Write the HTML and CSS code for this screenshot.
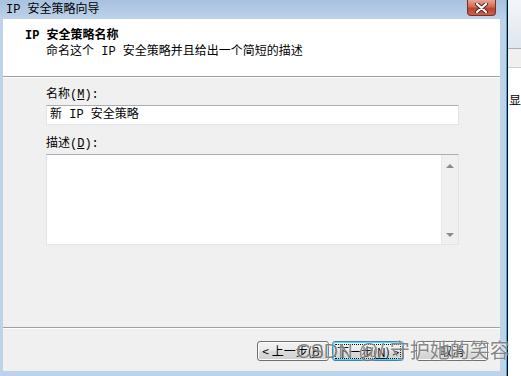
FILE: index.html
```html
<!DOCTYPE html>
<html lang="zh-CN">
<head>
    <meta charset="UTF-8">
    <meta name="viewport" content="width=device-width, initial-scale=1.0">
    <title>IP 安全策略向导</title>
    <link rel="stylesheet" href="styles.css">
</head>
<body>
    <div class="screen">
        <div class="wizard">
            <div class="titlebar">
                <span class="title">IP 安全策略向导</span>
                <div class="close">
                    <svg width="17" height="10" viewBox="0 0 17 10">
                        <path d="M4 1 L13 9 M13 1 L4 9" stroke="#4a2a26" stroke-width="4" stroke-linecap="round"/>
                        <path d="M4 1 L13 9 M13 1 L4 9" stroke="#ffffff" stroke-width="2.2" stroke-linecap="round"/>
                    </svg>
                </div>
            </div>
            <div class="frame">
                <div class="header">
                    <div class="header-title">IP 安全策略名称</div>
                    <div class="header-sub">命名这个 IP 安全策略并且给出一个简短的描述</div>
                </div>

                <div class="content">
                    <div class="label">名称(<u>M</u>):</div>
                    <div class="field">新 IP 安全策略</div>

                    <div class="label label-gap">描述(<u>D</u>):</div>
                    <div class="memo">
                        <div class="memo-text"></div>
                        <div class="scroll">
                            <span class="arrow-up"></span>
                            <span class="arrow-down"></span>
                        </div>
                    </div>
                </div>

                <div class="footer">
                    <div class="btn">&lt; 上一步(<u>B</u>)</div>
                    <div class="btn btn-default"><span class="focus">下一步(<u>N</u>) &gt;</span></div>
                    <div class="btn btn-cancel">取消</div>
                </div>
            </div>
            <div class="watermark">CSDN @/ 守护她的笑容</div>
        </div>
        <div class="edge"></div>
        <div class="behind">
            <div class="behind-top"></div>
            <div class="behind-bar"></div>
            <div class="behind-text">显示</div>
        </div>
    </div>
</body>
</html>
```

FILE: styles.css
```css
body {
    margin: 0;
    font-family: "Liberation Mono", "Noto Sans CJK SC", monospace;
    font-size: 12px;
    color: #000;
    background: #ffffff;
}
.screen {
    display: flex;
    width: 521px;
    height: 376px;
    overflow: hidden;
}
.wizard {
    position: relative;
    width: 506px;
    flex: none;
    display: flex;
    flex-direction: column;
    background: #bcd3ea;
}
.titlebar {
    height: 19px;
    display: flex;
    align-items: flex-start;
    justify-content: space-between;
    background: linear-gradient(#a8c1df, #bdd2ea);
}
.title {
    padding: 3px 0 0 6px;
    line-height: 14px;
}
.close {
    width: 27px;
    height: 15px;
    margin-right: 10px;
    border: 1px solid #7a2f24;
    border-top: none;
    border-radius: 0 0 4px 4px;
    background: linear-gradient(#e6a596, #d06a55 45%, #bf432b 55%, #c9624c);
    display: flex;
    align-items: center;
    justify-content: center;
}
.frame {
    margin: 0 6px 0 3px;
    height: 352px;
    display: flex;
    flex-direction: column;
    background: #f0f0f0;
}
.header {
    background: #ffffff;
    border-bottom: 1px solid #a0a0a0;
    box-shadow: 0 1px 0 #ffffff;
    padding: 10px 0 0 22px;
    height: 47px;
    line-height: 14px;
}
.header-title {
    font-weight: bold;
}
.header-sub {
    margin: 2px 0 0 21px;
}
.content {
    flex: 1;
    padding: 11px 41px 0 43px;
    line-height: 14px;
}
.label-gap {
    margin-top: 12px;
}
.field {
    margin-top: 3px;
    height: 18px;
    padding: 0 3px;
    line-height: 18px;
    background: #ffffff;
    border: 1px solid #e2e3ea;
    border-top-color: #abadb3;
}
.memo {
    margin-top: 3px;
    height: 89px;
    display: flex;
    background: #ffffff;
    border: 1px solid #e2e3ea;
    border-top-color: #abadb3;
}
.memo-text {
    flex: 1;
}
.scroll {
    width: 16px;
    background: #f0f0f0;
    border-left: 1px solid #e8e8e8;
    display: flex;
    flex-direction: column;
    justify-content: space-between;
    align-items: center;
    padding: 9px 0 7px;
}
.arrow-up {
    width: 0;
    height: 0;
    border-left: 4px solid transparent;
    border-right: 4px solid transparent;
    border-bottom: 4px solid #8a8a8a;
}
.arrow-down {
    width: 0;
    height: 0;
    border-left: 4px solid transparent;
    border-right: 4px solid transparent;
    border-top: 4px solid #8a8a8a;
}
.footer {
    border-top: 1px solid #a0a0a0;
    box-shadow: inset 0 1px 0 #ffffff;
    padding: 13px 12px 10px 0;
    display: flex;
    justify-content: flex-end;
    gap: 3px;
}
.btn {
    width: 70px;
    height: 18px;
    line-height: 18px;
    text-align: center;
    white-space: nowrap;
    font-family: "Noto Sans CJK SC", sans-serif;
    border: 1px solid #707070;
    border-radius: 3px;
    background: linear-gradient(#f2f2f2, #ebebeb 45%, #dddddd 50%, #cfcfcf);
    box-shadow: inset 0 0 0 1px #fcfcfc;
}
.btn-default {
    border-color: #3c7fb1;
    box-shadow: inset 0 0 0 1px #48d8fb;
    display: flex;
    align-items: center;
    justify-content: center;
}
.focus {
    outline: 1px dotted #000;
    line-height: 13px;
    padding: 0 1px;
}
.btn-cancel {
    margin-left: 9px;
}
.watermark {
    position: absolute;
    left: 296px;
    top: 338px;
    font-family: "Liberation Sans", "Noto Sans CJK SC", sans-serif;
    font-size: 20px;
    line-height: 26px;
    color: rgba(85, 85, 85, 0.7);
    text-shadow: 0 0 2px #ffffff;
    white-space: nowrap;
}
.edge {
    width: 1px;
    flex: none;
    background: #22b2e6;
    border-right: 1px solid #000;
}
.behind {
    flex: 1;
    background: #ffffff;
}
.behind-top {
    height: 48px;
    background: linear-gradient(#f4f6f9, #dfe6ee);
    border-bottom: 1px solid #a9b2bd;
}
.behind-bar {
    height: 18px;
    background: #f0f0f0;
    border-bottom: 1px solid #d0d0d0;
}
.behind-text {
    margin-top: 27px;
    padding-left: 1px;
    white-space: nowrap;
    line-height: 14px;
}
```
